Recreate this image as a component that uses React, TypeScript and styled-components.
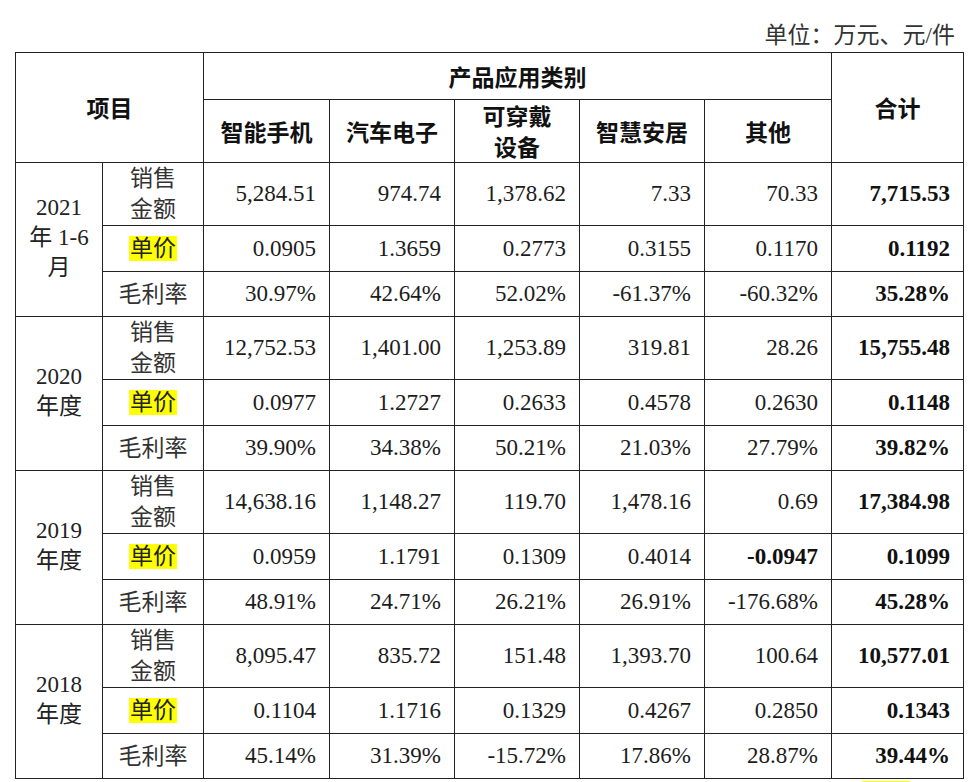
import React from "react";
import styled, { createGlobalStyle } from "styled-components";

const GlobalStyle = createGlobalStyle`
  html, body {
    margin: 0;
    padding: 0;
    background: #ffffff;
    overflow: hidden;
  }
  body {
    font-family: "Liberation Serif", "Noto Sans CJK SC", serif;
    color: #222;
  }
`;

const Page = styled.div`
  width: 975px;
  height: 782px;
  padding: 20px 12px 0 15px;
  box-sizing: border-box;
  display: flex;
  flex-direction: column;
`;

const UnitLine = styled.div`
  text-align: right;
  font-size: 23px;
  line-height: 32px;
  color: #333;
  padding-right: 8px;
`;

const Table = styled.table`
  width: 948px;
  border-collapse: collapse;
  table-layout: fixed;
  font-size: 23px;
`;

const HeadCell = styled.th<{ $h?: number }>`
  border: 1.3px solid #222;
  font-family: "Noto Sans CJK SC", sans-serif;
  font-weight: 700;
  color: #111;
  text-align: center;
  vertical-align: middle;
  line-height: 31px;
  padding: 0;
  height: ${(p) => (p.$h ? `${p.$h}px` : "auto")};
`;

const YearCell = styled.td`
  border: 1.3px solid #222;
  text-align: center;
  vertical-align: middle;
  line-height: 30px;
  color: #222;
  padding: 0 0 4px;
`;

const LabelCell = styled.td`
  border: 1.3px solid #222;
  text-align: center;
  vertical-align: middle;
  line-height: 31px;
  color: #333;
  padding: 0;
`;

const NumCell = styled.td<{ $bold?: boolean }>`
  border: 1.3px solid #222;
  text-align: right;
  vertical-align: middle;
  padding: 0 13px 0 0;
  font-family: "Liberation Serif", serif;
  font-weight: ${(p) => (p.$bold ? 700 : 400)};
  color: ${(p) => (p.$bold ? "#111" : "#1c1c1c")};
  white-space: nowrap;
`;

const Row = styled.tr<{ $h: number }>`
  height: ${(p) => p.$h}px;
`;

const Mark = styled.span`
  display: inline-block;
  background: #ffff00;
  height: 25px;
  line-height: 25px;
  padding: 0 1px;
  color: #222;
`;

const NextLine = styled.div`
  display: flex;
  justify-content: flex-end;
  padding: 2px 53px 0 0;
`;

const NextMark = styled.span`
  display: block;
  width: 48px;
  height: 25px;
  background: #ffff00;
`;

type Group = {
  year: React.ReactNode;
  sales: string[];
  price: string[];
  margin: string[];
  boldPrice?: number[];
};

const groups: Group[] = [
  {
    year: (
      <>
        2021
        <br />年 1-6
        <br />月
      </>
    ),
    sales: ["5,284.51", "974.74", "1,378.62", "7.33", "70.33", "7,715.53"],
    price: ["0.0905", "1.3659", "0.2773", "0.3155", "0.1170", "0.1192"],
    margin: ["30.97%", "42.64%", "52.02%", "-61.37%", "-60.32%", "35.28%"],
  },
  {
    year: (
      <>
        2020
        <br />年度
      </>
    ),
    sales: ["12,752.53", "1,401.00", "1,253.89", "319.81", "28.26", "15,755.48"],
    price: ["0.0977", "1.2727", "0.2633", "0.4578", "0.2630", "0.1148"],
    margin: ["39.90%", "34.38%", "50.21%", "21.03%", "27.79%", "39.82%"],
  },
  {
    year: (
      <>
        2019
        <br />年度
      </>
    ),
    sales: ["14,638.16", "1,148.27", "119.70", "1,478.16", "0.69", "17,384.98"],
    price: ["0.0959", "1.1791", "0.1309", "0.4014", "-0.0947", "0.1099"],
    margin: ["48.91%", "24.71%", "26.21%", "26.91%", "-176.68%", "45.28%"],
    boldPrice: [4],
  },
  {
    year: (
      <>
        2018
        <br />年度
      </>
    ),
    sales: ["8,095.47", "835.72", "151.48", "1,393.70", "100.64", "10,577.01"],
    price: ["0.1104", "1.1716", "0.1329", "0.4267", "0.2850", "0.1343"],
    margin: ["45.14%", "31.39%", "-15.72%", "17.86%", "28.87%", "39.44%"],
  },
];

const widths = [87, 101, 126, 125, 125, 125, 127, 132];

const Values = ({ values, boldAt = [] }: { values: string[]; boldAt?: number[] }) => (
  <>
    {values.map((v, i) => (
      <NumCell key={i} $bold={i === values.length - 1 || boldAt.includes(i)}>
        {v}
      </NumCell>
    ))}
  </>
);

export default function App() {
  return (
    <>
      <GlobalStyle />
      <Page>
        <UnitLine>单位：万元、元/件</UnitLine>
        <Table>
          <colgroup>
            {widths.map((w, i) => (
              <col key={i} style={{ width: w }} />
            ))}
          </colgroup>
          <thead>
            <tr>
              <HeadCell colSpan={2} rowSpan={2}>
                项目
              </HeadCell>
              <HeadCell colSpan={5} $h={46}>
                产品应用类别
              </HeadCell>
              <HeadCell rowSpan={2}>合计</HeadCell>
            </tr>
            <tr>
              <HeadCell $h={61}>智能手机</HeadCell>
              <HeadCell>汽车电子</HeadCell>
              <HeadCell>
                可穿戴
                <br />
                设备
              </HeadCell>
              <HeadCell>智慧安居</HeadCell>
              <HeadCell>其他</HeadCell>
            </tr>
          </thead>
          <tbody>
            {groups.map((g, gi) => (
              <React.Fragment key={gi}>
                <Row $h={62}>
                  <YearCell rowSpan={3}>{g.year}</YearCell>
                  <LabelCell>
                    销售
                    <br />
                    金额
                  </LabelCell>
                  <Values values={g.sales} />
                </Row>
                <Row $h={46}>
                  <LabelCell>
                    <Mark>单价</Mark>
                  </LabelCell>
                  <Values values={g.price} boldAt={g.boldPrice} />
                </Row>
                <Row $h={45}>
                  <LabelCell>毛利率</LabelCell>
                  <Values values={g.margin} />
                </Row>
              </React.Fragment>
            ))}
          </tbody>
        </Table>
        <NextLine>
          <NextMark />
        </NextLine>
      </Page>
    </>
  );
}
